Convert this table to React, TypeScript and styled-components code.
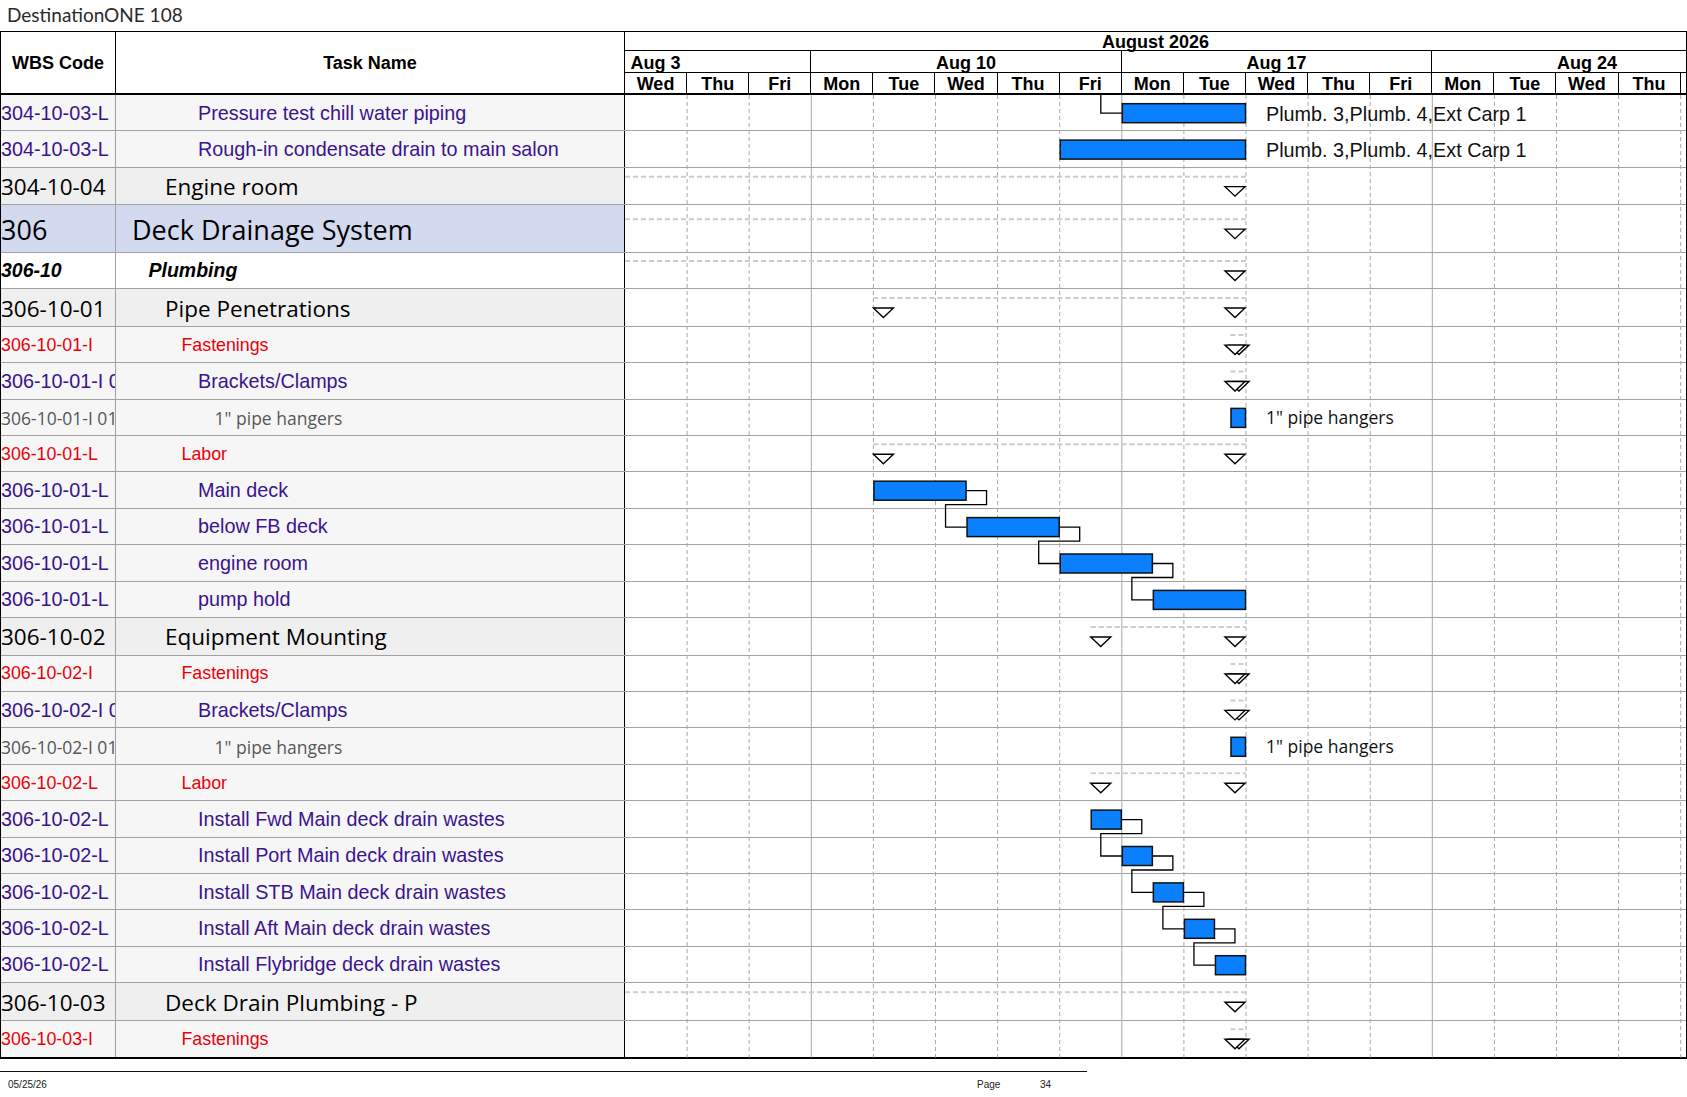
import React from "react";
import styled, { createGlobalStyle } from "styled-components";

const DAY = 62.1;
const CHART_W = 1061;
const ARIAL = `"Liberation Sans", Arial, sans-serif`;
const SOFT = `"Open Sans", "Noto Sans", sans-serif`;

type Kind = "task" | "red" | "gray" | "summary" | "top" | "group";

interface Task {
  wbs: string;
  name: string;
  kind: Kind;
  level: number;
  bar?: [number, number];
  label?: string;
  line?: [number, number];
  startTri?: number;
  endTri?: number;
  stacked?: boolean;
  linkIn?: boolean;
  linkNext?: boolean;
}

const PLUMB = "Plumb. 3,Plumb. 4,Ext Carp 1";
const HANGERS = '1" pipe hangers';

const rows: Task[] = [
  { wbs: "304-10-03-L", name: "Pressure test chill water piping", kind: "task", level: 5, bar: [8, 10], label: PLUMB, linkIn: true },
  { wbs: "304-10-03-L", name: "Rough-in condensate drain to main salon", kind: "task", level: 5, bar: [7, 10], label: PLUMB },
  { wbs: "304-10-04", name: "Engine room", kind: "summary", level: 3, line: [0, 10], endTri: 10 },
  { wbs: "306", name: "Deck Drainage System", kind: "top", level: 1, line: [0, 10], endTri: 10 },
  { wbs: "306-10", name: "Plumbing", kind: "group", level: 2, line: [0, 10], endTri: 10 },
  { wbs: "306-10-01", name: "Pipe Penetrations", kind: "summary", level: 3, line: [4, 10], startTri: 4, endTri: 10 },
  { wbs: "306-10-01-I", name: "Fastenings", kind: "red", level: 4, line: [9.75, 10], endTri: 10, stacked: true },
  { wbs: "306-10-01-I 01", name: "Brackets/Clamps", kind: "task", level: 5, line: [9.75, 10], endTri: 10, stacked: true },
  { wbs: "306-10-01-I 01-01", name: HANGERS, kind: "gray", level: 6, bar: [9.75, 10], label: HANGERS },
  { wbs: "306-10-01-L", name: "Labor", kind: "red", level: 4, line: [4, 10], startTri: 4, endTri: 10 },
  { wbs: "306-10-01-L", name: "Main deck", kind: "task", level: 5, bar: [4, 5.5], linkNext: true },
  { wbs: "306-10-01-L", name: "below FB deck", kind: "task", level: 5, bar: [5.5, 7], linkNext: true },
  { wbs: "306-10-01-L", name: "engine room", kind: "task", level: 5, bar: [7, 8.5], linkNext: true },
  { wbs: "306-10-01-L", name: "pump hold", kind: "task", level: 5, bar: [8.5, 10] },
  { wbs: "306-10-02", name: "Equipment Mounting", kind: "summary", level: 3, line: [7.5, 10], startTri: 7.5, endTri: 10 },
  { wbs: "306-10-02-I", name: "Fastenings", kind: "red", level: 4, line: [9.75, 10], endTri: 10, stacked: true },
  { wbs: "306-10-02-I 01", name: "Brackets/Clamps", kind: "task", level: 5, line: [9.75, 10], endTri: 10, stacked: true },
  { wbs: "306-10-02-I 01-01", name: HANGERS, kind: "gray", level: 6, bar: [9.75, 10], label: HANGERS },
  { wbs: "306-10-02-L", name: "Labor", kind: "red", level: 4, line: [7.5, 10], startTri: 7.5, endTri: 10 },
  { wbs: "306-10-02-L", name: "Install Fwd Main deck drain wastes", kind: "task", level: 5, bar: [7.5, 8], linkNext: true },
  { wbs: "306-10-02-L", name: "Install Port Main deck drain wastes", kind: "task", level: 5, bar: [8, 8.5], linkNext: true },
  { wbs: "306-10-02-L", name: "Install STB Main deck drain wastes", kind: "task", level: 5, bar: [8.5, 9], linkNext: true },
  { wbs: "306-10-02-L", name: "Install Aft Main deck drain wastes", kind: "task", level: 5, bar: [9, 9.5], linkNext: true },
  { wbs: "306-10-02-L", name: "Install Flybridge deck drain wastes", kind: "task", level: 5, bar: [9.5, 10] },
  { wbs: "306-10-03", name: "Deck Drain Plumbing - P", kind: "summary", level: 3, line: [0, 10], endTri: 10 },
  { wbs: "306-10-03-I", name: "Fastenings", kind: "red", level: 4, line: [9.75, 10], endTri: 10, stacked: true },
];

const weeks = ["Aug 3", "Aug 10", "Aug 17", "Aug 24"];
const days = ["Wed", "Thu", "Fri", "Mon", "Tue", "Wed", "Thu", "Fri", "Mon", "Tue", "Wed", "Thu", "Fri", "Mon", "Tue", "Wed", "Thu", ""];

const heightOf = (k: Kind) => (k === "top" ? 47.3 : k === "summary" ? 37.7 : 36.4);

const tops: number[] = [];
rows.reduce((acc, r) => {
  tops.push(acc);
  return acc + heightOf(r.kind);
}, 0);
const TOTAL = rows.reduce((a, r) => a + heightOf(r.kind), 0);

const fontFor: Record<Kind, string> = {
  task: `font-family: ${ARIAL}; font-size: 19.8px; color: #3b138e;`,
  red: `font-family: ${ARIAL}; font-size: 17.8px; color: #e8000b;`,
  gray: `font-family: ${SOFT}; font-size: 17.5px; color: #575757;`,
  summary: `font-family: ${SOFT}; font-size: 22.5px; color: #000;`,
  top: `font-family: ${SOFT}; font-size: 27px; color: #000;`,
  group: `font-family: ${ARIAL}; font-size: 19.5px; font-weight: 700; font-style: italic; color: #000;`,
};

const bgFor: Record<Kind, string> = {
  task: "#f6f6f6",
  red: "#f6f6f6",
  gray: "#f6f6f6",
  summary: "#efefef",
  top: "#d3d9ef",
  group: "#ffffff",
};

const GlobalStyle = createGlobalStyle`
  html, body {
    margin: 0;
    padding: 0;
    background: #ffffff;
    font-family: ${ARIAL};
  }
`;

const Page = styled.div`
  width: 1687px;
  height: 1097px;
  overflow: hidden;
  background: #fff;
`;

const TitleBar = styled.div`
  height: 31px;
  line-height: 30px;
  padding-left: 7px;
  font-family: Lato, "Noto Sans", sans-serif;
  font-size: 19px;
  color: #2a2a2a;
`;

const Table = styled.div`
  width: 1687px;
  box-sizing: border-box;
  border: 1px solid #000;
  border-bottom: 2px solid #000;
`;

const HeadRow = styled.div`
  display: flex;
  height: 63px;
  box-sizing: border-box;
  border-bottom: 2px solid #000;
`;

const HeadCell = styled.div<{ $w: number }>`
  flex: 0 0 ${(p) => p.$w}px;
  box-sizing: border-box;
  border-right: 1px solid #000;
  display: flex;
  align-items: center;
  justify-content: center;
  padding-top: 2px;
  font-weight: 700;
  font-size: 18px;
  color: #000;
`;

const Timeline = styled.div`
  flex: 0 0 ${CHART_W}px;
  display: flex;
  flex-direction: column;
  overflow: hidden;
  font-weight: 700;
  font-size: 18px;
  color: #000;
`;

const MonthRow = styled.div`
  height: 19px;
  box-sizing: border-box;
  border-bottom: 1px solid #000;
  text-align: center;
  line-height: 21px;
`;

const Strip = styled.div<{ $h: number; $shift?: number }>`
  display: flex;
  height: ${(p) => p.$h}px;
  box-sizing: border-box;
  margin-left: ${(p) => p.$shift ?? 0}px;
`;

const StripCell = styled.div<{ $w: number; $lh: number }>`
  flex: 0 0 ${(p) => p.$w}px;
  box-sizing: border-box;
  border-right: 1px solid #000;
  text-align: center;
  line-height: ${(p) => p.$lh}px;
  white-space: nowrap;
  overflow: hidden;
`;

const WeekRow = styled(Strip)`
  border-bottom: 1px solid #000;
`;

const Body = styled.div`
  position: relative;
`;

const Row = styled.div<{ $h: number }>`
  display: flex;
  height: ${(p) => p.$h}px;
  box-sizing: border-box;
  border-bottom: 1px solid #a2a2a2;

  &:last-of-type {
    border-bottom: none;
  }
`;

const WbsCell = styled.div<{ $kind: Kind }>`
  flex: 0 0 115px;
  box-sizing: border-box;
  border-right: 1px solid #a0a0a0;
  background: ${(p) => bgFor[p.$kind]};
  display: flex;
  align-items: center;
  overflow: hidden;
  white-space: nowrap;
  padding-top: 1px;
  ${(p) => fontFor[p.$kind]}
`;

const TaskCell = styled.div<{ $kind: Kind; $level: number }>`
  flex: 0 0 509px;
  box-sizing: border-box;
  border-right: 1px solid #000;
  background: ${(p) => bgFor[p.$kind]};
  display: flex;
  align-items: center;
  overflow: hidden;
  white-space: nowrap;
  padding-top: 1px;
  padding-left: ${(p) => 16.5 * p.$level - 0.5}px;
  ${(p) => fontFor[p.$kind]}
`;

const ChartCell = styled.div`
  flex: 1;
  background: #fff;
`;

const ChartLayer = styled.svg`
  position: absolute;
  top: 0;
  left: 624px;
  pointer-events: none;
  overflow: hidden;
`;

const FooterRule = styled.div`
  margin-top: 12px;
  width: 1087px;
  border-top: 1px solid #111;
`;

const FooterText = styled.div`
  display: grid;
  grid-template-columns: 969px 63px auto;
  padding-left: 8px;
  margin-top: 7px;
  font-size: 10px;
  line-height: 12px;
  color: #222;
`;

const Tri: React.FC<{ x: number; y: number }> = ({ x, y }) => (
  <path
    d={`M${x} ${y} L${x + 20} ${y} L${x + 10} ${y + 9.5} Z`}
    fill="#fff"
    stroke="#000"
    strokeWidth={1.4}
    strokeLinejoin="miter"
  />
);

const Chart: React.FC = () => (
  <ChartLayer width={CHART_W} height={TOTAL}>
    {Array.from({ length: 17 }, (_, k) => {
      const i = k + 1;
      const x = i * DAY;
      const solid = i === 3 || i === 8 || i === 13;
      return (
        <line
          key={`v${i}`}
          x1={x}
          x2={x}
          y1={0}
          y2={TOTAL}
          stroke="#a8a8a8"
          strokeWidth={1}
          strokeDasharray={solid ? undefined : "4 3"}
        />
      );
    })}
    {rows.map((r, i) => {
      const c = tops[i] + heightOf(r.kind) / 2;
      const parts: React.ReactNode[] = [];
      if (r.line) {
        parts.push(
          <line
            key="dash"
            x1={r.line[0] * DAY}
            x2={r.line[1] * DAY}
            y1={c - 10}
            y2={c - 10}
            stroke="#cdcdcd"
            strokeWidth={2}
            strokeDasharray="5 3"
          />
        );
      }
      if (r.startTri !== undefined) parts.push(<Tri key="st" x={r.startTri * DAY} y={c} />);
      if (r.endTri !== undefined) {
        const x = r.endTri * DAY - 21;
        if (r.stacked) parts.push(<Tri key="et2" x={x + 4} y={c} />);
        parts.push(<Tri key="et" x={x} y={c} />);
      }
      if (r.linkIn && r.bar) {
        const xs = r.bar[0] * DAY;
        parts.push(
          <polyline key="in" points={`${xs - 21},0 ${xs - 21},${c} ${xs},${c}`} fill="none" stroke="#000" strokeWidth={1.3} />
        );
      }
      if (r.linkNext && r.bar) {
        const next = rows[i + 1];
        const c2 = tops[i + 1] + heightOf(next.kind) / 2;
        const xe = r.bar[1] * DAY;
        const xs2 = (next.bar ? next.bar[0] : 0) * DAY;
        parts.push(
          <polyline
            key="link"
            points={`${xe},${c} ${xe + 20},${c} ${xe + 20},${c + 14} ${xs2 - 21},${c + 14} ${xs2 - 21},${c2} ${xs2},${c2}`}
            fill="none"
            stroke="#000"
            strokeWidth={1.3}
          />
        );
      }
      if (r.bar) {
        parts.push(
          <rect
            key="bar"
            x={r.bar[0] * DAY + 0.5}
            y={c - 9.5}
            width={(r.bar[1] - r.bar[0]) * DAY - 1}
            height={19}
            fill="#0a80ff"
            stroke="#111"
            strokeWidth={1.5}
          />
        );
      }
      if (r.label && r.bar) {
        const soft = r.kind === "gray";
        parts.push(
          <text
            key="lbl"
            x={r.bar[1] * DAY + 20}
            y={c + (soft ? 6.5 : 7.5)}
            fontFamily={soft ? SOFT : ARIAL}
            fontSize={soft ? 17.5 : 19.8}
            fill="#111"
          >
            {r.label}
          </text>
        );
      }
      return <g key={i}>{parts}</g>;
    })}
  </ChartLayer>
);

const App: React.FC = () => (
  <Page>
    <GlobalStyle />
    <TitleBar>DestinationONE 108</TitleBar>
    <Table>
      <HeadRow>
        <HeadCell $w={115}>WBS Code</HeadCell>
        <HeadCell $w={509}>Task Name</HeadCell>
        <Timeline>
          <MonthRow>August 2026</MonthRow>
          <WeekRow $h={22} $shift={-2 * DAY}>
            {weeks.map((w) => (
              <StripCell key={w} $w={5 * DAY} $lh={24}>
                {w}
              </StripCell>
            ))}
          </WeekRow>
          <Strip $h={20}>
            {days.map((d, i) => (
              <StripCell key={i} $w={DAY} $lh={22}>
                {d}
              </StripCell>
            ))}
          </Strip>
        </Timeline>
      </HeadRow>
      <Body>
        {rows.map((r, i) => (
          <Row key={i} $h={heightOf(r.kind)}>
            <WbsCell $kind={r.kind}>{r.wbs}</WbsCell>
            <TaskCell $kind={r.kind} $level={r.level}>
              {r.name}
            </TaskCell>
            <ChartCell />
          </Row>
        ))}
        <Chart />
      </Body>
    </Table>
    <FooterRule />
    <FooterText>
      <span>05/25/26</span>
      <span>Page</span>
      <span>34</span>
    </FooterText>
  </Page>
);

export default App;
